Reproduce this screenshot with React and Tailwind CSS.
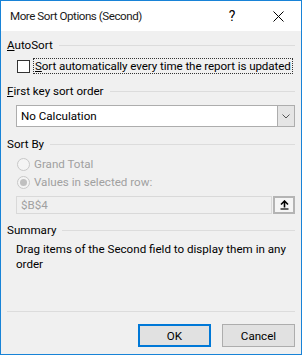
import React from 'react';

const GroupHeader = ({ children }) => (
  <div className="flex items-center h-[14px]">
    <span>{children}</span>
    <div className="flex-1 h-px bg-[#dcdcdc] ml-[6px]" />
  </div>
);

const Radio = ({ checked, label }) => (
  <div className="flex items-center h-[14px] pl-[10px] text-[#a0a0a0]">
    <span className="w-[13px] h-[13px] rounded-full border border-[#c8c8c8] bg-[#f4f4f4] flex items-center justify-center">
      {checked && <span className="w-[7px] h-[7px] rounded-full bg-[#c0c0c0]" />}
    </span>
    <span className="ml-[4px]">{label}</span>
  </div>
);

const App = () => {
  return (
    <div className="w-[302px] h-[355px] border border-[#1883d7] bg-[#f0f0f0] flex flex-col text-[11.6px] text-black font-['Segoe_UI','Roboto',sans-serif] leading-[14px] overflow-hidden">
      {/* Title bar */}
      <div className="h-[30px] bg-white flex items-center shrink-0">
        <span className="ml-[9px] flex-1 text-[#1a1a1a] tracking-[-0.45px]">More Sort Options (Second)</span>
        <span className="w-[46px] text-center text-[14px]">?</span>
        <span className="w-[46px] flex justify-center">
          <svg width="11" height="11" viewBox="0 0 11 11">
            <path d="M0.5 0.5 L10.5 10.5 M10.5 0.5 L0.5 10.5" stroke="#000" strokeWidth="1" />
          </svg>
        </span>
      </div>

      {/* Body */}
      <div className="flex-1 flex flex-col px-[6px]">
        <div className="mt-[7px]">
          <GroupHeader>
            <span className="underline">A</span>utoSort
          </GroupHeader>
        </div>

        <div className="mt-[6px] flex items-center pl-[10px] h-[16px]">
          <span className="w-[13px] h-[13px] border border-[#333] bg-white shrink-0" />
          <span className="ml-[3px] px-[1px] border border-dotted border-[#333] whitespace-nowrap tracking-[-0.08px]">
            <span className="underline">S</span>ort automatically every time the report is updated
          </span>
        </div>

        <div className="mt-[10px]">
          <GroupHeader>
            <span className="underline">F</span>irst key sort order
          </GroupHeader>
        </div>

        <div className="mt-[7px] ml-[9px] mr-[0px] h-[22px] border border-[#adadad] bg-white flex">
          <span className="flex-1 pl-[4px] flex items-center">No Calculation</span>
          <span className="w-[17px] bg-[#e5e5e5] border-l border-[#adadad] flex items-center justify-center">
            <svg width="8" height="5" viewBox="0 0 8 5">
              <path d="M0.5 0.5 L4 4 L7.5 0.5" stroke="#555" strokeWidth="1" fill="none" />
            </svg>
          </span>
        </div>

        <div className="mt-[10px]">
          <GroupHeader>Sort By</GroupHeader>
        </div>

        <div className="mt-[6px]">
          <Radio label="Grand Total" />
        </div>
        <div className="mt-[4px]">
          <Radio checked label="Values in selected row:" />
        </div>

        <div className="mt-[7px] ml-[9px] h-[18px] flex items-stretch">
          <div className="flex-1 border border-[#d9d9d9] bg-[#f0f0f0] flex items-center pl-[4px] text-[#a0a0a0]">
            $B$4
          </div>
          <div className="ml-[1px] w-[22px] border-2 border-[#b4b4b4] bg-[#f5f5f5] flex items-center justify-center">
            <svg width="9" height="10" viewBox="0 0 9 10">
              <path d="M4.5 1 L4.5 7.5 M1 4.5 L4.5 1 L8 4.5" stroke="#000" strokeWidth="1.6" fill="none" />
              <path d="M0.5 9 L8.5 9" stroke="#000" strokeWidth="1.2" />
            </svg>
          </div>
        </div>

        <div className="mt-[9px]">
          <GroupHeader>Summary</GroupHeader>
        </div>

        <div className="mt-[5px] pl-[9px] pr-[2px] leading-[15px]">
          Drag items of the Second field to display them in any order
        </div>

        <div className="flex-1" />

        <div className="h-px bg-[#dcdcdc]" />

        <div className="mt-[12px] mb-[7px] flex justify-end gap-[11px]">
          <button className="w-[73px] h-[23px] border-2 border-[#0078d7] bg-[#e1e1e1] text-[11.6px]">OK</button>
          <button className="w-[73px] h-[23px] border border-[#adadad] bg-[#e1e1e1] text-[11.6px]">Cancel</button>
        </div>
      </div>
    </div>
  );
};

export default App;
